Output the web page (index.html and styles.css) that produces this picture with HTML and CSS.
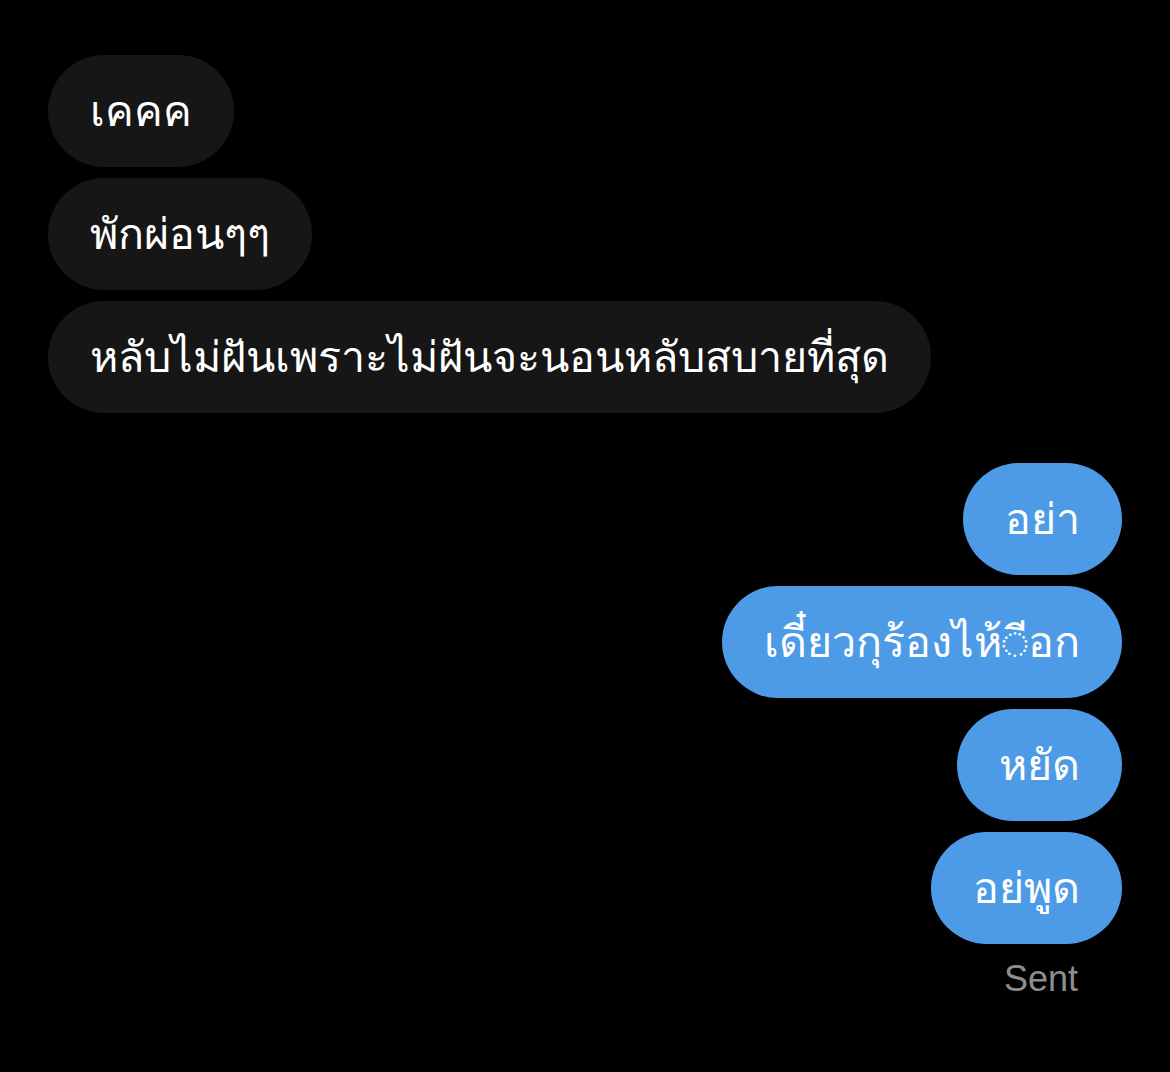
FILE: index.html
```html
<!DOCTYPE html>
<html lang="th">
<head>
  <meta charset="UTF-8">
  <meta name="viewport" content="width=device-width, initial-scale=1.0">
  <title>Chat</title>
  <link rel="stylesheet" href="styles.css">
</head>
<body>
  <div class="thread">
    <div class="group received">
      <div class="bubble">เคคค</div>
      <div class="bubble">พักผ่อนๆๆ</div>
      <div class="bubble">หลับไม่ฝันเพราะไม่ฝันจะนอนหลับสบายที่สุด</div>
    </div>
    <div class="group sent">
      <div class="bubble">อย่า</div>
      <div class="bubble">เดี๋ยวกุร้องไห้&#x25CC;ีอก</div>
      <div class="bubble">หยัด</div>
      <div class="bubble">อย่พูด</div>
      <div class="status">Sent</div>
    </div>
  </div>
</body>
</html>
```

FILE: styles.css
```css
body {
  margin: 0;
  background-color: #000;
  font-family: "Noto Sans", "DejaVu Sans", sans-serif;
  color: #fff;
}
.thread {
  padding: 55px 48px 0 48px;
  display: flex;
  flex-direction: column;
  gap: 50px;
}
.group {
  display: flex;
  flex-direction: column;
  gap: 11px;
}
.received {
  align-items: flex-start;
}
.sent {
  align-items: flex-end;
}
.bubble {
  height: 112px;
  box-sizing: border-box;
  padding: 0 42px;
  border-radius: 56px;
  display: flex;
  align-items: center;
  font-size: 43px;
  white-space: nowrap;
}
.received .bubble {
  background-color: #161616;
}
.sent .bubble {
  background-color: #4d9be6;
}
.status {
  margin-top: 3px;
  margin-right: 44px;
  font-family: "Liberation Sans", Arial, sans-serif;
  font-size: 36px;
  color: #8e8e8e;
}
```
